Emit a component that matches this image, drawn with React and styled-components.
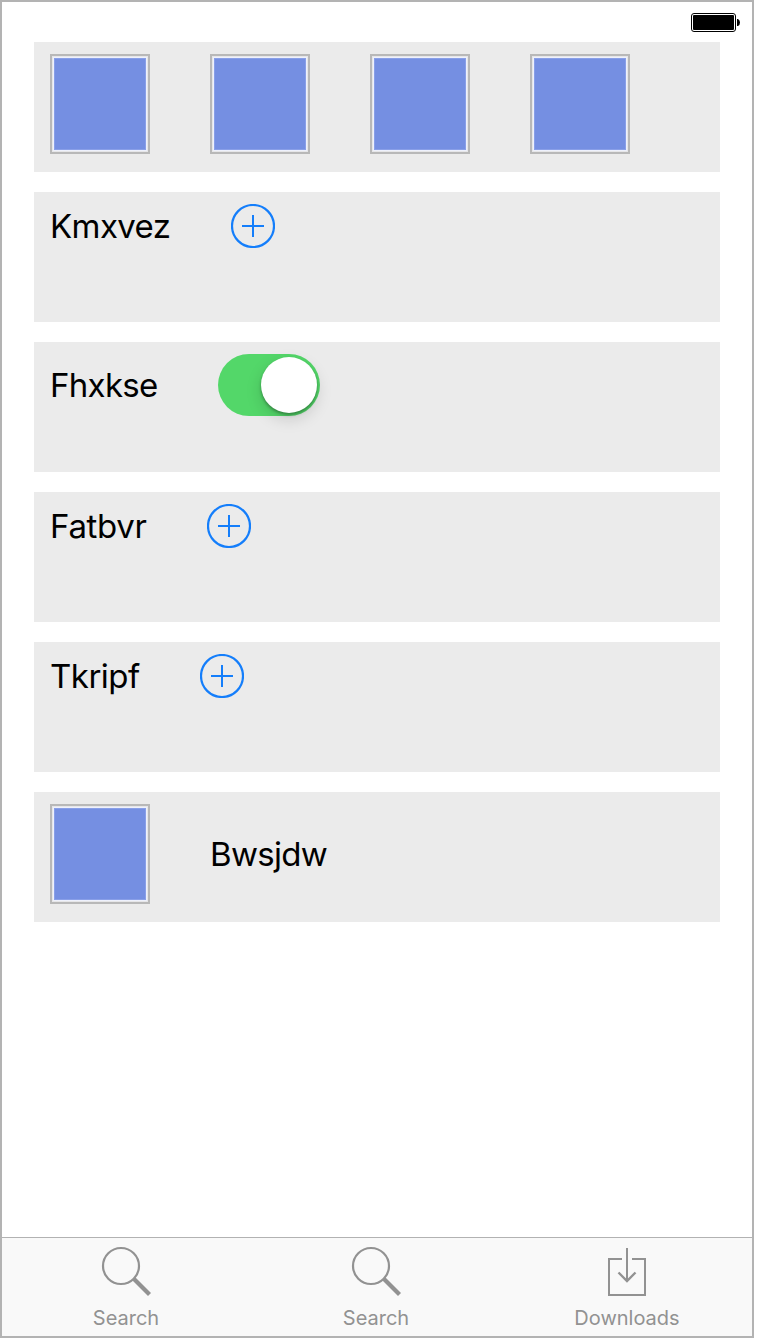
import React from "react";
import styled, { createGlobalStyle } from "styled-components";

const GlobalStyle = createGlobalStyle`
  * { box-sizing: border-box; }
  body { margin: 0; background: #fff; }
`;

const Screen = styled.div`
  width: 754px;
  height: 1338px;
  display: flex;
  flex-direction: column;
  border: 2px solid #b3b3b3;
  background: #fff;
  font-family: Inter, "Liberation Sans", sans-serif;
  color: #000;
`;

const StatusBar = styled.header`
  height: 40px;
  flex: none;
  display: flex;
  justify-content: flex-end;
  padding: 11px 12px 0 0;
`;

const List = styled.main`
  flex: 1;
  display: flex;
  flex-direction: column;
  gap: 20px;
  padding: 0 32px;
`;

const Row = styled.section`
  height: 130px;
  display: flex;
  align-items: flex-start;
  gap: 60px;
  padding: 12px 16px;
  background: #ebebeb;
`;

const Swatch = styled.div`
  display: flex;
  width: 100px;
  height: 100px;
  flex: none;
  padding: 1px;
  border: 2px solid #b8b8b8;
  background: #e6e6e8;

  &::before {
    content: "";
    flex: 1;
    border: 1px solid #eef1fc;
    background: #758fe2;
    box-shadow: inset 0 0 0 1px #899fe8;
  }
`;

const Label = styled.span`
  display: flex;
  align-items: center;
  flex: none;
  width: ${(p) => p.$width}px;
  height: ${(p) => p.$height || 44}px;
  font-size: 33px;
  line-height: 40px;
  letter-spacing: ${(p) => p.$spacing || 0}px;
  white-space: nowrap;
`;

const AddButton = styled.button`
  display: block;
  width: 44px;
  height: 44px;
  padding: 0;
  border: 0;
  background: none;
`;

const Switch = styled.div`
  display: flex;
  justify-content: flex-end;
  width: 102px;
  height: 62px;
  padding: 3px;
  border-radius: 31px;
  background: #53d769;
`;

const Knob = styled.div`
  width: 56px;
  height: 56px;
  border-radius: 50%;
  background: #fff;
  box-shadow: 0 2px 3px rgba(0, 0, 0, 0.3), 0 6px 16px rgba(0, 0, 0, 0.15);
`;

const TabBar = styled.nav`
  height: 99px;
  flex: none;
  display: grid;
  grid-template-columns: repeat(3, 1fr);
  border-top: 1px solid #b2b2b2;
  background: #f9f9f9;
`;

const Tab = styled.div`
  display: flex;
  flex-direction: column;
  align-items: center;
  padding: 8px ${(p) => p.$inset || 0}px 0 0;
  color: #929292;
`;

const TabLabel = styled.span`
  margin-top: 10px;
  font-size: 20px;
  line-height: 24px;
`;

const Battery = () => (
  <svg width="49" height="19" viewBox="0 0 49 19">
    <rect x="0.5" y="0.5" width="44" height="18" rx="2.5" fill="#fff" stroke="#000" />
    <rect x="2" y="2" width="41" height="15" rx="1" />
    <path d="M46 6h1q2 1 2 3.500t-2 3.500h-1z" />
  </svg>
);

const Add = () => (
  <AddButton aria-label="Add">
    <svg width="44" height="44" viewBox="0 0 44 44" fill="none" stroke="#147efb" strokeWidth="2" display="block">
      <circle cx="22" cy="22" r="21" strokeWidth="2.2" />
      <path d="M11 22h22M22 11v22" />
    </svg>
  </AddButton>
);

const SearchIcon = () => (
  <svg width="50" height="50" viewBox="0 0 50 50" fill="none" stroke="currentColor">
    <circle cx="20" cy="20" r="18" strokeWidth="2.200" />
    <path d="M32.500 32.500l16 16" strokeWidth="4.200" />
  </svg>
);

const DownloadIcon = () => (
  <svg width="50" height="50" viewBox="0 0 50 50" fill="none" stroke="currentColor" strokeWidth="2">
    <path d="M20 13H7v36h36V13H30M25 2v33" />
    <path d="M16.500 26.500L25 35l8.500-8.500" strokeWidth="2.400" />
  </svg>
);

const items = [
  { text: "Kmxvez", width: 121, spacing: -0.6 },
  { text: "Fhxkse", width: 108, spacing: -0.7, toggle: true },
  { text: "Fatbvr", width: 97, spacing: -0.3 },
  { text: "Tkripf", width: 90, spacing: -0.5 },
];

export default function App() {
  return (
    <>
      <GlobalStyle />
      <Screen>
        <StatusBar><Battery /></StatusBar>
        <List>
          <Row><Swatch /><Swatch /><Swatch /><Swatch /></Row>
          {items.map((item) => (
            <Row key={item.text}>
              <Label $width={item.width} $height={item.toggle ? 62 : 44} $spacing={item.spacing}>{item.text}</Label>
              {item.toggle ? <Switch role="switch" aria-checked="true"><Knob /></Switch> : <Add />}
            </Row>
          ))}
          <Row><Swatch /><Label $width={118} $height={100} $spacing={-0.7}>Bwsjdw</Label></Row>
        </List>
        <TabBar>
          <Tab $inset={2}><SearchIcon /><TabLabel>Search</TabLabel></Tab>
          <Tab $inset={2}><SearchIcon /><TabLabel>Search</TabLabel></Tab>
          <Tab><DownloadIcon /><TabLabel>Downloads</TabLabel></Tab>
        </TabBar>
      </Screen>
    </>
  );
}
